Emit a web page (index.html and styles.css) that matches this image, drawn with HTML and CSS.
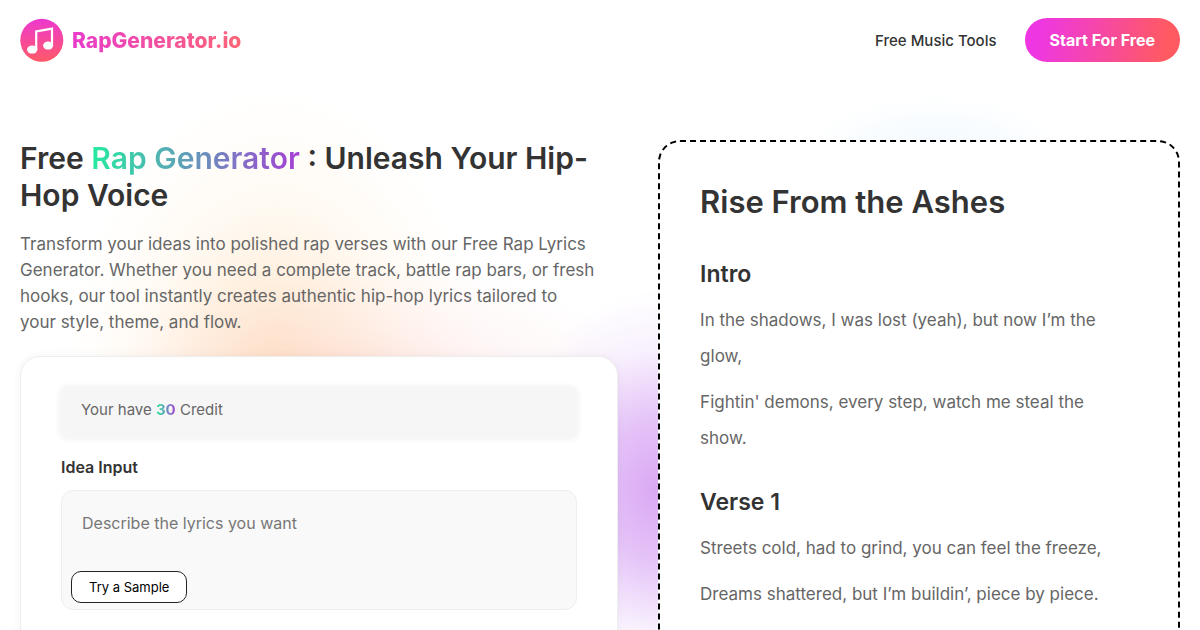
FILE: index.html
```html
<!DOCTYPE html>
<html lang="en">
<head>
    <meta charset="UTF-8">
    <meta name="viewport" content="width=device-width, initial-scale=1.0">
    <title>Free Rap Generator</title>
    <link rel="stylesheet" href="styles.css">
</head>
<body>
    <div class="page">
        <header class="header">
            <a class="logo" href="#">
                <svg class="logo-icon" viewBox="0 0 44 44" aria-hidden="true">
                    <defs>
                        <linearGradient id="logoFill" x1="0" y1="0" x2="0" y2="1">
                            <stop offset="0" stop-color="#ed38cf"/>
                            <stop offset="1" stop-color="#ff5a68"/>
                        </linearGradient>
                    </defs>
                    <circle cx="21.8" cy="22.3" r="21.5" fill="url(#logoFill)"/>
                    <path d="M16.2 32V13.4L32 10.6V28" fill="none" stroke="#fff" stroke-width="2.2"/>
                    <ellipse cx="12.2" cy="31.6" rx="5.2" ry="4" fill="#fff"/>
                    <ellipse cx="28.1" cy="27.6" rx="5" ry="4" fill="#fff"/>
                </svg>
                <span class="logo-text">RapGenerator.io</span>
            </a>
            <nav class="nav">
                <a class="nav-link" href="#">Free Music Tools</a>
                <a class="start-button" href="#">Start For Free</a>
            </nav>
        </header>

        <main class="hero">
            <section class="intro">
                <h1>Free <span class="gradient-text">Rap Generator</span> : Unleash Your Hip-Hop Voice</h1>
                <p class="description">Transform your ideas into polished rap verses with our Free Rap Lyrics Generator. Whether you need a complete track, battle rap bars, or fresh hooks, our tool instantly creates authentic hip-hop lyrics tailored to<br> your style, theme, and flow.</p>

                <form class="card">
                    <div class="credit">Your have <b class="gradient-text">30</b> Credit</div>
                    <label class="label" for="idea">Idea Input</label>
                    <div class="idea">
                        <textarea id="idea" placeholder="Describe the lyrics you want"></textarea>
                        <button class="sample-button" type="button">Try a Sample</button>
                    </div>
                </form>
            </section>

            <article class="lyrics">
                <h2>Rise From the Ashes</h2>
                <h3>Intro</h3>
                <p>In the shadows, I was lost (yeah), but now I’m the<br> glow,</p>
                <p>Fightin' demons, every step, watch me steal the<br> show.</p>
                <h3>Verse 1</h3>
                <p>Streets cold, had to grind, you can feel the freeze,</p>
                <p>Dreams shattered, but I’m buildin’, piece by piece.</p>
            </article>
        </main>
    </div>
</body>
</html>
```
FILE: styles.css
```css
* {
    box-sizing: border-box;
}

body {
    margin: 0;
    font-family: Inter, "Open Sans", sans-serif;
    color: #666;
}

h1, h2, h3, p {
    margin: 0;
}

a {
    text-decoration: none;
}

.page {
    display: flex;
    flex-direction: column;
    height: 100vh;
    overflow: hidden;
    background:
        radial-gradient(150px 200px at 655px 490px, rgba(218, 168, 243, 1), rgba(222, 180, 246, 0.8) 35%, rgba(238, 220, 252, 0.4) 70%, rgba(255, 255, 255, 0)),
        radial-gradient(280px 140px at 370px 400px, rgba(253, 195, 190, 0.45), rgba(253, 215, 215, 0.25) 50%, rgba(255, 240, 240, 0)),
        radial-gradient(220px 330px at 275px 410px, rgba(254, 210, 168, 0.85), rgba(254, 224, 190, 0.6) 30%, rgba(255, 238, 215, 0.35) 60%, rgba(255, 250, 240, 0.2) 85%, rgba(255, 250, 240, 0)),
        radial-gradient(130px 60px at 935px 155px, rgba(225, 242, 255, 0.5), rgba(240, 250, 255, 0)),
        #fff;
}

.header {
    display: flex;
    justify-content: space-between;
    align-items: center;
    height: 80px;
    padding: 0 20px;
    flex: none;
}

.logo {
    display: flex;
    align-items: center;
    gap: 8px;
}

.logo-icon {
    width: 44px;
    height: 44px;
}

.logo-text {
    font-size: 21px;
    font-weight: 800;
    background: linear-gradient(90deg, #e93bcb, #fb6676);
    -webkit-background-clip: text;
    background-clip: text;
    color: transparent;
}

.nav {
    display: flex;
    align-items: center;
    gap: 28px;
}

.nav-link {
    font-size: 15px;
    font-weight: 500;
    color: #333;
}

.start-button {
    padding: 0 25px;
    border-radius: 22px;
    background: linear-gradient(100deg, #ee37e2 10%, #ff5a62 90%);
    color: #fff;
    font-size: 16px;
    font-weight: 700;
    line-height: 44px;
}

.hero {
    display: grid;
    grid-template-columns: 1.146fr 1fr;
    gap: 40px;
    padding: 60px 20px;
}

h1, h2 {
    color: #333;
    font-size: 30px;
    font-weight: 600;
    line-height: 37px;
}

h2 {
    margin-bottom: 36px;
    font-size: 31px;
}

.gradient-text {
    background: linear-gradient(90deg, #26eba0, #a63fd5);
    -webkit-background-clip: text;
    background-clip: text;
    color: transparent;
}

.description {
    margin-top: 17px;
    font-size: 17px;
    line-height: 26px;
}

.card {
    margin-top: 21px;
    padding: 29px 40px 40px;
    height: 480px;
    border: 1px solid #eee;
    border-radius: 20px;
    background: #fff;
    box-shadow: 0 0 10px rgba(0, 0, 0, 0.05);
}

.credit {
    height: 50px;
    padding: 12px 20px;
    border-radius: 8px;
    background: #f6f6f6;
    box-shadow: 0 2px 5px 3px #f6f6f6;
    font-size: 15px;
    line-height: 24px;
}

.label {
    display: block;
    margin: 19px 0 11px;
    color: #333;
    font-size: 16px;
    font-weight: 600;
    line-height: 24px;
}

.idea {
    position: relative;
}

textarea {
    display: block;
    width: 100%;
    height: 120px;
    padding: 20px;
    border: 1px solid #eee;
    border-radius: 12px;
    background: #f9f9f9;
    font-family: inherit;
    font-size: 16px;
    line-height: 24px;
    resize: none;
}

textarea::placeholder {
    color: #777;
}

.sample-button {
    position: absolute;
    left: 10px;
    bottom: 7px;
    height: 32px;
    padding: 0 17px;
    border: 1px solid #222;
    border-radius: 10px;
    background: #fff;
    color: #000;
    font-family: inherit;
    font-size: 13px;
}

.lyrics {
    padding: 41px 40px;
    border: 2px dashed #000;
    border-radius: 22px;
    background: #fff;
}

.lyrics h3 {
    margin: 28px 0 10px;
    color: #333;
    font-size: 23px;
    font-weight: 600;
    line-height: 36px;
}

.lyrics p {
    margin-bottom: 10px;
    font-size: 17px;
    line-height: 36px;
}
```
